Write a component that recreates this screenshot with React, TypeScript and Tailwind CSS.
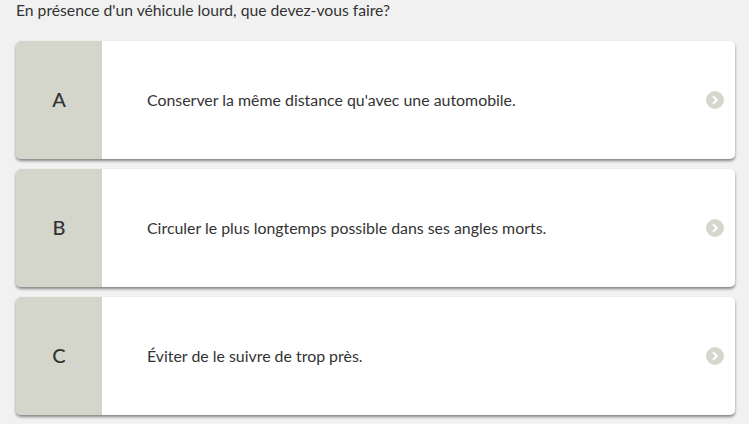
import React from "react";

const options = [
  { letter: "A", text: "Conserver la même distance qu'avec une automobile." },
  { letter: "B", text: "Circuler le plus longtemps possible dans ses angles morts." },
  { letter: "C", text: "Éviter de le suivre de trop près." },
];

function Chevron() {
  return (
    <div className="w-[18px] h-[18px] rounded-full bg-[#d5d7cd] flex items-center justify-center">
      <svg width="10" height="10" viewBox="0 0 10 10">
        <path d="M3.6 1.8 L6.8 5 L3.6 8.2" fill="none" stroke="#ffffff" strokeWidth="2.2" strokeLinecap="round" strokeLinejoin="round" />
      </svg>
    </div>
  );
}

export default function App() {
  return (
    <div className="w-[749px] h-[424px] bg-[#f1f1f1] overflow-hidden" style={{ fontFamily: "Lato, 'Open Sans', sans-serif" }}>
      <div className="px-4 text-[15.7px] leading-[22px] h-[23px] -mt-[1px] text-[#333333]">
        En présence d'un véhicule lourd, que devez-vous faire?
      </div>
      <div className="flex flex-col gap-[10px] pl-4 pr-[14px] mt-[19px]">
        {options.map((o) => (
          <div
            key={o.letter}
            className="flex h-[118px] bg-white rounded-[5px] overflow-hidden shadow-[0_2px_3px_rgba(0,0,0,0.45)]"
          >
            <div className="w-[86px] shrink-0 bg-[#d4d6cc] flex items-center justify-center pb-[2px] text-[20px] font-medium text-[#333333]">
              {o.letter}
            </div>
            <div className="flex-1 flex items-center pl-[45px] text-[15.9px] text-[#333333]">
              {o.text}
            </div>
            <div className="flex items-center pr-[11px]">
              <Chevron />
            </div>
          </div>
        ))}
      </div>
    </div>
  );
}
